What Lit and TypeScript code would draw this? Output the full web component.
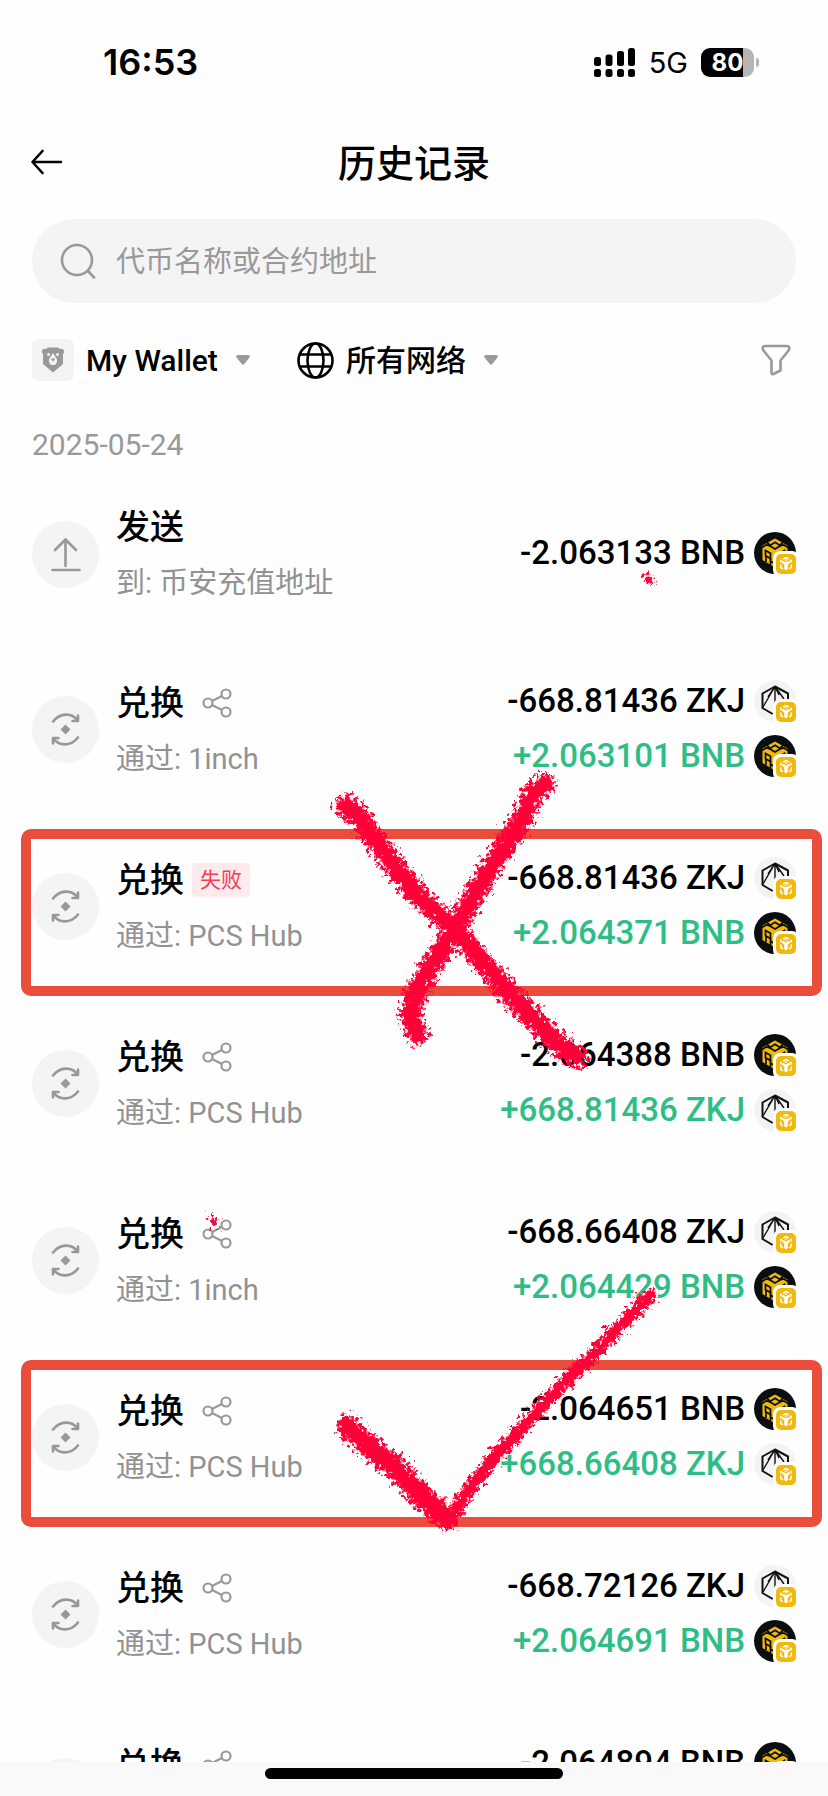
import { LitElement, html, css, svg, nothing } from "lit";
import { customElement, property } from "lit/decorators.js";
import { classMap } from "lit/directives/class-map.js";

type Coin = "BNB" | "ZKJ";
interface Amount { value: string; coin: Coin; }
interface Entry {
  kind: "send" | "swap";
  title: string;
  note: string;
  amounts: Amount[];
  failed?: boolean;
  marked?: boolean;
}

const swap = (note: string, out: Amount, inn: Amount, extra: Partial<Entry> = {}): Entry =>
  ({ kind: "swap", title: "兑换", note, amounts: [out, inn], ...extra });
const bnb = (value: string): Amount => ({ value, coin: "BNB" });
const zkj = (value: string): Amount => ({ value, coin: "ZKJ" });

const ENTRIES: Entry[] = [
  { kind: "send", title: "发送", note: "到: 币安充值地址", amounts: [bnb("-2.063133")] },
  swap("通过: 1inch", zkj("-668.81436"), bnb("+2.063101")),
  swap("通过: PCS Hub", zkj("-668.81436"), bnb("+2.064371"), { failed: true, marked: true }),
  swap("通过: PCS Hub", bnb("-2.064388"), zkj("+668.81436")),
  swap("通过: 1inch", zkj("-668.66408"), bnb("+2.064429")),
  swap("通过: PCS Hub", bnb("-2.064651"), zkj("+668.66408"), { marked: true }),
  swap("通过: PCS Hub", zkj("-668.72126"), bnb("+2.064691")),
  swap("通过: PCS Hub", bnb("-2.064894"), zkj("+668.72126")),
];

const cube = svg`
  <path fill="#f0b90b" d="M21 6.500 33.500 13.500V28L21 35.500 8.500 28V13.500Z"/>
  <g fill="none" stroke="#0b0e11" stroke-width="1.700">
    <path d="M21 10.300 26.500 13.700 21 17 15.500 13.700Z"/>
    <path d="M8 15.500 12 13 15.500 13.700M34 15.500 30 13 26.500 13.700M13 10.500 16 13M29 10.500 26 13"/>
    <path d="M11.500 18.500 16.500 21.300V26.500L11.500 23.700ZM30.500 18.500 25.500 21.300V26.500L30.500 23.700Z"/>
    <path d="M16.500 26.500V33M12 24V30M16.500 29 20 31.500V36"/>
  </g>`;

const badge = svg`
  <rect x="19" y="19" width="26" height="26" rx="7" fill="#fff"/>
  <rect x="22" y="22" width="20" height="20" rx="5" fill="#f0b90b"/>
  <path fill="none" stroke="#fff" stroke-width="1.500" d="M29.200 27 32 25.500 34.800 27M26.800 30.500V28.600L27.800 28M37.200 30.500V28.600L36.200 28M26.800 32.500V35.500L29 36.800M37.200 32.500V35.500L35 36.800"/>
  <path fill="#fff" d="M28.500 28.800 30.300 29.500 32 30.500 33.700 29.500 35.500 28.800 36.300 30.500 33.800 32.500V37L32 38.500 30.200 37V32.500L27.700 30.500ZM30.500 28 32 27.200 33.500 28 32 28.900Z"/>`;

@customElement("coin-icon")
class CoinIcon extends LitElement {
  @property() coin: Coin = "BNB";
  static styles = css`
    :host { display: block; width: 42px; height: 42px; flex: none; }
    svg { display: block; overflow: visible; }
  `;
  render() {
    return html`<svg width="42" height="42" viewBox="0 0 42 42" aria-hidden="true">
      ${this.coin === "BNB"
        ? svg`<circle cx="21" cy="21" r="21" fill="#0b0e11"/>${cube}`
        : svg`<circle cx="21" cy="21" r="21" fill="#f3f3f3"/>
          <g fill="none" stroke="#111" stroke-linejoin="round">
            <path stroke-width="2" d="M18.700 34 8.500 28V13.500L21 6.500 34 13.500V19"/>
            <path stroke-width="1.400" d="M21 6.500 9 27M21 6.500 14 17M21 6.500V23M21 6.500 25 15M21 6.500 30 19"/>
          </g>`}
      ${badge}
    </svg>`;
  }
}

@customElement("history-row")
class HistoryRow extends LitElement {
  @property({ attribute: false }) entry!: Entry;
  static styles = css`
    :host { display: block; }
    .row {
      position: relative; display: flex; align-items: center; gap: 17px;
      min-height: 177px; padding: 0 32px; box-sizing: border-box;
    }
    .row.send { min-height: 174px; }
    .row.marked::after {
      content: ""; position: absolute; inset: 11px 6px -1px 21px;
      border: 10px solid #eb4d3d; border-radius: 10px; pointer-events: none;
    }
    .disc { width: 67px; height: 67px; border-radius: 50%; background: #f4f4f4; flex: none; }
    .disc svg { display: block; }
    .text { flex: 1; min-width: 0; padding-top: 2px; }
    .head { display: flex; align-items: center; height: 56px; }
    .title { font-size: 34px; line-height: 56px; font-weight: 500; color: #000; margin: 0; }
    .note { font-size: 29px; line-height: 56px; color: #929292; margin: 0; }
    .failed {
      margin-left: 8px; padding: 0 8px; border-radius: 4px; background: #ffeaed;
      color: #f03e57; font-size: 21px; line-height: 34px;
    }
    .share { border: 0; background: none; padding: 0; margin-left: 18px; height: 32px; }
    .share svg { display: block; }
    .amounts { display: grid; gap: 13px; padding-bottom: 3px; }
    .amount {
      display: flex; align-items: center; justify-content: flex-end; gap: 9px;
      font-size: 33px; line-height: 42px; font-weight: 500; color: #000; white-space: nowrap;
    }
    .amount.plus { color: #2ebd85; }
  `;
  render() {
    const e = this.entry;
    return html`<article class=${classMap({ row: true, send: e.kind === "send", marked: !!e.marked })}>
      <div class="disc">
        <svg width="67" height="67" viewBox="0 0 67 67" fill="none" stroke="#989898" stroke-width="2.600" stroke-linecap="round" stroke-linejoin="round" aria-hidden="true">
          ${e.kind === "send"
            ? svg`<path d="M33.500 45V19M23 29 33.500 18.500 44 29M20.500 49H47.500"/>`
            : svg`<path d="M21 25.500C28 16.500 40 16.500 45.500 24.500M46 19.500V25H40.500M46 41.500C39 50.500 27 50.500 21.500 42.500M21 47.500V42H26.500"/>
              <path fill="#989898" stroke="none" d="M33.500 28.500 38.500 33.500 33.500 38.500 28.500 33.500Z"/>`}
        </svg>
      </div>
      <div class="text">
        <div class="head">
          <h2 class="title">${e.title}</h2>
          ${e.failed ? html`<span class="failed">失败</span>` : nothing}
          ${e.kind === "swap" && !e.failed
            ? html`<button class="share" aria-label="分享">
                <svg width="30" height="30" viewBox="0 0 30 30" fill="none" stroke="#999" stroke-width="2.200">
                  <circle cx="6" cy="15" r="4.500"/><circle cx="24" cy="6" r="4.500"/><circle cx="24" cy="24" r="4.500"/>
                  <path d="M10 13 20 8M10 17 20 22"/>
                </svg>
              </button>`
            : nothing}
        </div>
        <p class="note">${e.note}</p>
      </div>
      <div class="amounts">
        ${e.amounts.map((a) => html`<div class=${classMap({ amount: true, plus: a.value.startsWith("+") })}>
          <span>${a.value} ${a.coin}</span><coin-icon .coin=${a.coin}></coin-icon>
        </div>`)}
      </div>
    </article>`;
  }
}

@customElement("app-root")
class AppRoot extends LitElement {
  static styles = css`
    :host {
      display: flex; flex-direction: column; height: 100vh; overflow: hidden;
      background: #fefefe; color: #000;
      font-family: Roboto, "Noto Sans CJK SC", sans-serif;
    }
    svg { display: block; }
    button { border: 0; background: none; padding: 0; color: inherit; }
    .status {
      display: flex; align-items: center; justify-content: space-between;
      height: 124px; padding: 0 69px 0 103px; flex: none;
      font-family: Inter, sans-serif; box-sizing: border-box;
    }
    .time { font-size: 36px; font-weight: 600; }
    .signals { display: flex; align-items: center; gap: 13px; }
    .net { font-size: 29px; }
    .battery { display: flex; align-items: center; gap: 2px; }
    .cell {
      width: 53px; height: 29px; border-radius: 9px; text-align: center;
      background: linear-gradient(90deg, #000 80%, #b5b5b5 80%);
      color: #fff; font-size: 24px; font-weight: 700; line-height: 29px;
    }
    .nub { width: 3px; height: 9px; border-radius: 0 3px 3px 0; background: #b5b5b5; }
    .bar {
      display: grid; grid-template-columns: 32px 1fr 32px; align-items: center;
      height: 76px; padding: 0 31px; flex: none;
    }
    .bar h1 { margin: 0; padding-top: 4px; text-align: center; font-size: 38px; line-height: 56px; font-weight: 500; }
    .search {
      display: flex; align-items: center; gap: 20px; height: 84px; flex: none;
      margin: 19px 32px 0; padding: 0 28px; border-radius: 42px; background: #f4f4f4; box-sizing: border-box;
    }
    .search input {
      flex: 1; min-width: 0; border: 0; outline: 0; background: none; padding: 2px 0 0;
      font: 400 29px/44px Roboto, "Noto Sans CJK SC", sans-serif; color: #000;
    }
    .search input::placeholder { color: #999; opacity: 1; }
    .filters { display: flex; align-items: center; gap: 47px; height: 42px; margin: 36px 37px 0 32px; flex: none; }
    .pick { display: flex; align-items: center; }
    .pick select {
      appearance: none; border: 0; background: none; margin: 0 18px 0 12px; padding: 2px 0 0;
      font: 500 30px/42px Roboto, "Noto Sans CJK SC", sans-serif; color: #000;
    }
    .funnel { margin-left: auto; }
    .list { position: relative; flex: 1; min-height: 0; overflow: hidden; margin-top: 42px; }
    .date { display: block; padding: 0 32px; font-size: 30px; line-height: 44px; color: #999; }
    .scribble { position: absolute; top: 0; left: 0; pointer-events: none; }
    .home { height: 34px; flex: none; background: #f9f9f9; display: flex; justify-content: center; padding-top: 6px; box-sizing: border-box; }
    .pill { width: 36%; height: 11px; border-radius: 6px; background: #000; }
  `;

  private caret() {
    return html`<svg width="14" height="10" viewBox="0 0 14 10" fill="#999" aria-hidden="true">
      <path d="M2 0H12C14 0 14 1.500 13.400 2.500L8.300 9C7.500 10 6.500 10 5.700 9L.6 2.500C0 1.500 0 0 2 0Z"/></svg>`;
  }

  render() {
    return html`
      <div class="status">
        <span class="time">16:53</span>
        <div class="signals">
          <svg width="42" height="30" viewBox="0 0 42 30" aria-label="信号">
            <rect x="0" y="10" width="7" height="9" rx="2.500"/><rect x="11.500" y="7.500" width="7" height="11.500" rx="2.500"/>
            <rect x="23" y="4" width="7" height="15" rx="2.500"/><rect x="34" y="1" width="7" height="18" rx="2.500"/>
            <rect x="0" y="22" width="7" height="8" rx="2.500"/><rect x="11.500" y="22" width="7" height="8" rx="2.500"/>
            <rect x="23" y="22" width="7" height="8" rx="2.500"/><rect x="34" y="22" width="7" height="8" rx="2.500"/>
          </svg>
          <span class="net">5G</span>
          <div class="battery"><div class="cell">80</div><div class="nub"></div></div>
        </div>
      </div>
      <header class="bar">
        <button aria-label="返回">
          <svg width="32" height="26" viewBox="0 0 32 26" fill="none" stroke="#000" stroke-width="2.600" stroke-linecap="round" stroke-linejoin="round">
            <path d="M30 13H2M11.500 2 1.500 13 11.500 24"/></svg>
        </button>
        <h1>历史记录</h1>
      </header>
      <label class="search">
        <svg width="36" height="36" viewBox="0 0 36 36" fill="none" stroke="#999" stroke-width="2.600" stroke-linecap="round" aria-hidden="true">
          <circle cx="17" cy="17" r="15"/><path d="M28 28 34 34.500"/></svg>
        <input type="search" aria-label="代币名称或合约地址" placeholder="代币名称或合约地址" />
      </label>
      <div class="filters">
        <label class="pick">
          <svg width="42" height="42" viewBox="0 0 42 42" aria-hidden="true">
            <rect width="42" height="42" rx="7" fill="#f3f3f3"/>
            <path fill="#999" d="M10 11.500C11 9.500 13 9.500 14.500 10L16 8.500H26L27.500 10C29 9.500 31 9.500 32 11.500 32.500 13.500 31.500 14.500 31 15V25L21 33.500 11 25V15C10.500 14.500 9.500 13.500 10 11.500Z"/>
            <circle cx="16.500" cy="15.500" r="1.500" fill="#f3f3f3"/><circle cx="25.500" cy="15.500" r="1.500" fill="#f3f3f3"/>
            <path fill="#f3f3f3" d="M21 14C23 18 25.500 19 25 22.500 24.500 25.500 22.500 26 21 26S17.500 25.500 17 22.500C16.500 19 19 18 21 14Z"/>
            <path fill="#999" d="M18.500 19.500H23.500L21 22.500Z"/>
          </svg>
          <select aria-label="钱包"><option>My Wallet</option></select>${this.caret()}
        </label>
        <label class="pick">
          <svg width="37" height="37" viewBox="0 0 37 37" fill="none" stroke="#000" stroke-width="2.600" aria-hidden="true">
            <circle cx="18.500" cy="18.500" r="17"/><ellipse cx="18.500" cy="18.500" rx="8" ry="17"/><path d="M3 12.500H34M3 24.500H34"/></svg>
          <select aria-label="网络"><option>所有网络</option></select>${this.caret()}
        </label>
        <button class="funnel" aria-label="筛选">
          <svg width="30" height="32" viewBox="0 0 30 32" fill="none" stroke="#999" stroke-width="2.600" stroke-linejoin="round">
            <path d="M4 2H26C28.500 2 29 4.500 27.500 6.500L19.500 16.500V26.500L12.500 30C11 30.500 10.500 29.500 10.500 28.500V16.500L2.500 6.500C1 4.500 1.500 2 4 2Z"/></svg>
        </button>
      </div>
      <main class="list">
        <time class="date" datetime="2025-05-24">2025-05-24</time>
        ${ENTRIES.map((e) => html`<history-row .entry=${e}></history-row>`)}
        <svg class="scribble" width="828" height="1339" viewBox="0 423 828 1339" aria-hidden="true">
          <defs>
            <filter id="crayon" filterUnits="userSpaceOnUse" x="0" y="423" width="828" height="1339" color-interpolation-filters="sRGB">
              <feTurbulence type="fractalNoise" baseFrequency="0.240" numOctaves="3" seed="4" result="n"/>
              <feDisplacementMap in="SourceGraphic" in2="n" scale="20" xChannelSelector="R" yChannelSelector="G" result="d"/>
              <feColorMatrix in="n" type="matrix" values="0 0 0 0 0  0 0 0 0 0  0 0 0 0 0  0 0 4 0 -1.100" result="m"/>
              <feComposite in="d" in2="m" operator="in" result="c"/>
              <feGaussianBlur in="c" stdDeviation="0.500"/>
            </filter>
            <filter id="edge" filterUnits="userSpaceOnUse" x="0" y="423" width="828" height="1339" color-interpolation-filters="sRGB">
              <feTurbulence type="fractalNoise" baseFrequency="0.240" numOctaves="2" seed="9" result="n"/>
              <feDisplacementMap in="SourceGraphic" in2="n" scale="14" xChannelSelector="R" yChannelSelector="G"/>
              <feGaussianBlur stdDeviation="0.500"/>
            </filter>
          </defs>
          ${[["crayon", 23, 25, 14], ["edge", 14, 16, 9]].map(([f, a, b, c]) => svg`
            <g filter="url(#${f})" fill="none" stroke="#ff0038" stroke-linecap="round" stroke-linejoin="round">
              <path stroke-width=${a} d="M346 806 358 816 374 839 397 869 420 898 455 929 480 959 510 994 545 1031 566 1051 578 1056"/>
              <path stroke-width=${a} d="M544 784 531 797 525 814 507 842 480 885 459 922 435 960 418 988 410 1015 417 1034"/>
              <path stroke-width=${b} d="M348 1427 368 1446 396 1468 425 1500 447 1518"/>
              <path stroke-width=${c} d="M448 1522 465 1496 490 1462 525 1425 555 1392 590 1358 620 1326 650 1296"/>
              <path stroke-width=${(c as number) - 7} d="M647 577 650 580M212 1218 216 1223"/>
            </g>`)}
        </svg>
      </main>
      <div class="home"><div class="pill"></div></div>
    `;
  }
}
